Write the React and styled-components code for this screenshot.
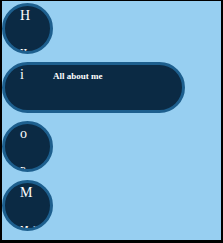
import React from "react";
import styled, { createGlobalStyle } from "styled-components";

const GlobalStyle = createGlobalStyle`
  html, body {
    margin: 0;
    padding: 0;
    background: #000;
  }
  * {
    box-sizing: border-box;
  }
`;

const items = [
  { letter: "H", label: "Home" },
  { letter: "i", label: "All about me", open: true },
  { letter: "o", label: "Portfolio" },
  { letter: "M", label: "Mail" },
];

export default function App() {
  return (
    <>
      <GlobalStyle />
      <Frame>
        <Nav>
          {items.map((item) => (
            <Item key={item.letter} $open={item.open}>
              <Letter>{item.letter}</Letter>
              <Label $open={item.open}>{item.label}</Label>
            </Item>
          ))}
        </Nav>
      </Frame>
    </>
  );
}

const Frame = styled.div`
  width: 223px;
  height: 243px;
  border-style: solid;
  border-color: #000;
  border-width: 1px 2px 3px 2px;
  background: #97cff1;
`;

const Nav = styled.nav`
  display: flex;
  flex-direction: column;
  align-items: flex-start;
  gap: 8px;
  padding-top: 2px;
`;

const Item = styled.div`
  width: ${(p) => (p.$open ? "183px" : "51px")};
  height: 51px;
  border: 3px solid #1d5f8e;
  border-radius: 26px;
  background: #0b2a44;
  overflow: hidden;
  display: flex;
  flex-wrap: wrap;
  align-content: flex-start;
  align-items: baseline;
  padding-left: 15px;
  color: #fff;
  font-family: "Liberation Serif", "Times New Roman", serif;
  cursor: pointer;
`;

const Letter = styled.span`
  width: 33px;
  flex-shrink: 0;
  font-size: 14px;
  line-height: 20px;
`;

const Label = styled.span`
  font-size: 9px;
  font-weight: bold;
  line-height: 12px;
  white-space: nowrap;
  margin-top: ${(p) => (p.$open ? "0" : "20px")};
`;
